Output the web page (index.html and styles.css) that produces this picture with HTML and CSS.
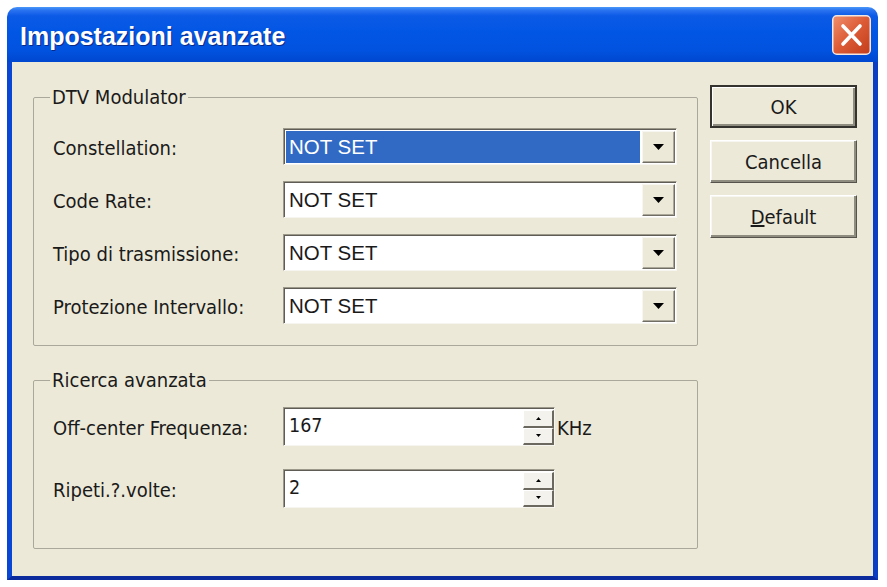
FILE: index.html
```html
<!DOCTYPE html>
<html lang="it">
<head>
<meta charset="utf-8">
<title>Impostazioni avanzate</title>
<link rel="stylesheet" href="styles.css">
</head>
<body>
<div class="window">
  <div class="titlebar">
    <span class="title">Impostazioni avanzate</span>
    <div class="close" aria-label="Chiudi">
      <svg width="39" height="40" viewBox="0 0 39 40">
        <defs>
          <linearGradient id="cg" x1="0" y1="0" x2="1" y2="1">
            <stop offset="0" stop-color="#f0906e"/>
            <stop offset="0.5" stop-color="#dc5a35"/>
            <stop offset="1" stop-color="#c23d1c"/>
          </linearGradient>
        </defs>
        <rect x="0.75" y="0.75" width="37.5" height="38.5" rx="4" fill="url(#cg)" stroke="#f3e6e0" stroke-width="1.5"/>
        <path d="M11 11 L28 29 M28 11 L11 29" stroke="#ffffff" stroke-width="3.6" stroke-linecap="round"/>
      </svg>
    </div>
  </div>
  <div class="client">
    <div class="left">
      <fieldset class="group g1">
        <legend>DTV Modulator</legend>
        <div class="rows">
          <div class="row">
            <span class="label">Constellation:</span>
            <div class="combo">
              <span class="value selected">NOT SET</span>
              <span class="drop"><svg width="11" height="6" viewBox="0 0 11 6"><path d="M0 0 H11 L5.5 6 Z" fill="#000"/></svg></span>
            </div>
          </div>
          <div class="row">
            <span class="label">Code Rate:</span>
            <div class="combo">
              <span class="value">NOT SET</span>
              <span class="drop"><svg width="11" height="6" viewBox="0 0 11 6"><path d="M0 0 H11 L5.5 6 Z" fill="#000"/></svg></span>
            </div>
          </div>
          <div class="row">
            <span class="label">Tipo di trasmissione:</span>
            <div class="combo">
              <span class="value">NOT SET</span>
              <span class="drop"><svg width="11" height="6" viewBox="0 0 11 6"><path d="M0 0 H11 L5.5 6 Z" fill="#000"/></svg></span>
            </div>
          </div>
          <div class="row">
            <span class="label">Protezione Intervallo:</span>
            <div class="combo">
              <span class="value">NOT SET</span>
              <span class="drop"><svg width="11" height="6" viewBox="0 0 11 6"><path d="M0 0 H11 L5.5 6 Z" fill="#000"/></svg></span>
            </div>
          </div>
        </div>
      </fieldset>
      <fieldset class="group g2">
        <legend>Ricerca avanzata</legend>
        <div class="rows">
          <div class="row">
            <span class="label">Off-center Frequenza:</span>
            <div class="spin">
              <span class="value">167</span>
              <span class="spinner">
                <span class="sbtn"><svg width="5" height="3" viewBox="0 0 5 3"><path d="M0 3 H5 L2.5 0 Z" fill="#000"/></svg></span>
                <span class="sbtn"><svg width="5" height="3" viewBox="0 0 5 3"><path d="M0 0 H5 L2.5 3 Z" fill="#000"/></svg></span>
              </span>
            </div>
            <span class="unit">KHz</span>
          </div>
          <div class="row">
            <span class="label">Ripeti.?.volte:</span>
            <div class="spin">
              <span class="value">2</span>
              <span class="spinner">
                <span class="sbtn"><svg width="5" height="3" viewBox="0 0 5 3"><path d="M0 3 H5 L2.5 0 Z" fill="#000"/></svg></span>
                <span class="sbtn"><svg width="5" height="3" viewBox="0 0 5 3"><path d="M0 0 H5 L2.5 3 Z" fill="#000"/></svg></span>
              </span>
            </div>
          </div>
        </div>
      </fieldset>
    </div>
    <div class="buttons">
      <div class="btn default">OK</div>
      <div class="btn">Cancella</div>
      <div class="btn"><span><u>D</u>efault</span></div>
    </div>
  </div>
</div>
</body>
</html>
```

FILE: styles.css
```css
body {
  margin: 0;
  background: #ffffff;
  font-family: "Liberation Sans", Arial, sans-serif;
  color: #1a1a1a;
}

.window {
  margin: 7px 0 0 7px;
  width: 871px;
}

.titlebar {
  height: 55px;
  box-sizing: border-box;
  display: flex;
  align-items: center;
  justify-content: space-between;
  padding: 0 7px 0 13px;
  border-radius: 10px 10px 0 0;
  background: linear-gradient(to bottom, #4a97fa 0%, #2a73f0 6%, #0c5ae6 16%, #0256e4 45%, #0152df 80%, #0047cf 100%);
}

.title {
  color: #ffffff;
  font-weight: bold;
  font-size: 25px;
  padding-top: 3px;
  text-shadow: 1px 1px 0 #0b2a86;
}

.close {
  width: 39px;
  height: 40px;
  display: flex;
}

.client {
  box-sizing: border-box;
  width: 871px;
  height: 518px;
  display: flex;
  align-items: flex-start;
  gap: 12px;
  padding: 23px 0 0 21px;
  background: #ece9d8;
  border-left: 5px solid #0a46d4;
  border-right: 5px solid #0a3cc4;
  border-bottom: 4px solid #0b2a9c;
  font-family: "DejaVu Sans Condensed", "DejaVu Sans", sans-serif;
  font-stretch: condensed;
}

.left {
  width: 665px;
  margin-top: 2px;
}

.group {
  margin: 0;
  min-width: 0;
  border: 1px solid #aaa89a;
  border-radius: 2px;
}

.group legend {
  padding: 0 2px;
  font-size: 20px;
  line-height: 20px;
  color: #1a1a1a;
}

.g1 {
  padding: 21px 20px 21px 16px;
}

.g2 {
  margin-top: 24px;
  padding: 17px 20px 40px 16px;
}

.rows {
  display: flex;
  flex-direction: column;
}

.g1 .rows {
  gap: 16px;
}

.g2 .rows {
  gap: 23px;
}

.row {
  display: flex;
  align-items: center;
}

.g1 .row {
  height: 37px;
}

.g2 .row {
  height: 39px;
}

.label {
  width: 233px;
  box-sizing: border-box;
  padding-left: 3px;
  padding-top: 3px;
  font-size: 20px;
  white-space: nowrap;
}

.combo {
  width: 394px;
  height: 37px;
  box-sizing: border-box;
  display: flex;
  align-items: stretch;
  background: #ffffff;
  border: 1px solid;
  border-color: #9c998b #f6f5ef #f6f5ef #9c998b;
  box-shadow: inset 1px 1px 0 #5e5c54;
  padding: 2px 1px 1px 2px;
}

.combo .value {
  flex: 1;
  display: flex;
  align-items: center;
  padding-left: 3px;
  margin-right: 2px;
  font-family: "Liberation Sans", Arial, sans-serif;
  font-stretch: normal;
  font-size: 20.5px;
  color: #1a1a1a;
}

.combo .value.selected {
  background: #316ac5;
  color: #ffffff;
}

.drop {
  width: 33px;
  box-sizing: border-box;
  display: flex;
  align-items: center;
  justify-content: center;
  background: #ece9d8;
  border: 1px solid;
  border-color: #f7f6f0 #6f6d64 #6f6d64 #f7f6f0;
  box-shadow: inset -1px -1px 0 #aca899;
}

.spin {
  width: 272px;
  height: 39px;
  box-sizing: border-box;
  display: flex;
  background: #ffffff;
  border: 1px solid;
  border-color: #9c998b #f6f5ef #f6f5ef #9c998b;
  box-shadow: inset 1px 1px 0 #5e5c54;
  padding: 2px 0 0 2px;
}

.spin .value {
  flex: 1;
  padding: 4px 0 0 3px;
  font-size: 19.5px;
  color: #1a1a1a;
}

.spinner {
  width: 31px;
  display: flex;
  flex-direction: column;
}

.sbtn {
  flex: 1;
  display: flex;
  align-items: center;
  justify-content: center;
  background: #f3f2ec;
  border-top: 1px solid #ffffff;
  border-left: 1px solid #ffffff;
  border-right: 2px solid #6a685f;
  border-bottom: 2px solid #6a685f;
}

.unit {
  margin-left: 2px;
  font-size: 20px;
  padding-top: 2px;
}

.buttons {
  width: 147px;
  display: flex;
  flex-direction: column;
  gap: 12px;
}

.btn {
  height: 43px;
  box-sizing: border-box;
  display: flex;
  align-items: center;
  justify-content: center;
  font-size: 20px;
  color: #1a1a1a;
  background: #ece9d8;
  border: 1px solid;
  border-color: #ffffff #55534c #55534c #ffffff;
  box-shadow: inset -2px -2px 0 #8f8d80, inset 1px 1px 0 #f7f6f0;
}

.btn.default {
  border: 2px solid #35332e;
  box-shadow: inset 1px 1px 0 #ffffff, inset -2px -2px 0 #8f8d80;
}
```
